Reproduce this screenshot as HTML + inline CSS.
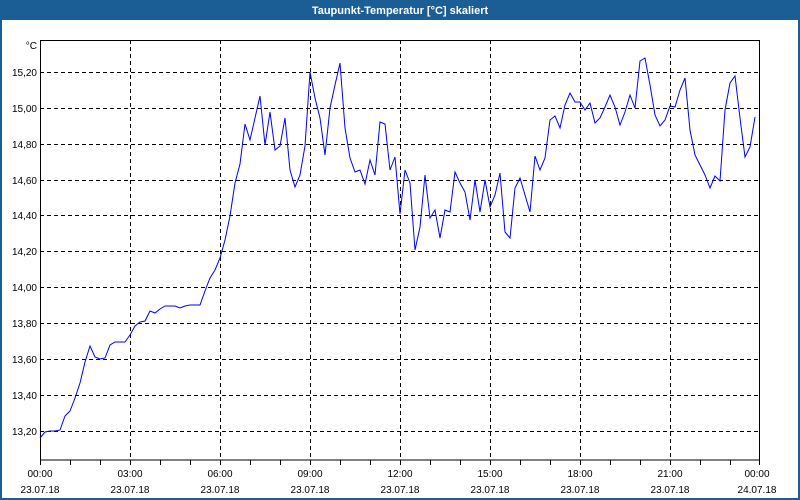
<!DOCTYPE html>
<html><head><meta charset="utf-8"><style>
html,body{margin:0;padding:0;width:800px;height:500px;overflow:hidden;background:#fff;font-family:"Liberation Sans",sans-serif}
</style></head><body>
<svg width="800" height="500" xmlns="http://www.w3.org/2000/svg" font-family="Liberation Sans, sans-serif">
<rect x="0" y="0" width="800" height="500" fill="#1b5e96"/>
<rect x="2" y="20" width="796" height="478" fill="#fff"/>
<text x="400" y="14" text-anchor="middle" fill="#fff" font-size="11" font-weight="bold">Taupunkt-Temperatur [°C] skaliert</text>
<g stroke="#000" stroke-dasharray="4,3" stroke-width="1">
<line x1="130.5" y1="40" x2="130.5" y2="460"/><line x1="220.5" y1="40" x2="220.5" y2="460"/><line x1="310.5" y1="40" x2="310.5" y2="460"/><line x1="400.5" y1="40" x2="400.5" y2="460"/><line x1="490.5" y1="40" x2="490.5" y2="460"/><line x1="580.5" y1="40" x2="580.5" y2="460"/><line x1="670.5" y1="40" x2="670.5" y2="460"/>
<line x1="40" y1="72.5" x2="760" y2="72.5"/><line x1="40" y1="108.5" x2="760" y2="108.5"/><line x1="40" y1="144.5" x2="760" y2="144.5"/><line x1="40" y1="180.5" x2="760" y2="180.5"/><line x1="40" y1="215.5" x2="760" y2="215.5"/><line x1="40" y1="251.5" x2="760" y2="251.5"/><line x1="40" y1="287.5" x2="760" y2="287.5"/><line x1="40" y1="323.5" x2="760" y2="323.5"/><line x1="40" y1="359.5" x2="760" y2="359.5"/><line x1="40" y1="395.5" x2="760" y2="395.5"/><line x1="40" y1="431.5" x2="760" y2="431.5"/>
</g>
<rect x="40.5" y="40.5" width="719" height="419.5" fill="none" stroke="#000"/>
<g stroke="#000"><path d="M40.5 460v5M70.5 460v5M100.5 460v5M130.5 460v5M160.5 460v5M190.5 460v5M220.5 460v5M250.5 460v5M280.5 460v5M310.5 460v5M340.5 460v5M370.5 460v5M400.5 460v5M430.5 460v5M460.5 460v5M490.5 460v5M520.5 460v5M550.5 460v5M580.5 460v5M610.5 460v5M640.5 460v5M670.5 460v5M700.5 460v5M730.5 460v5M759.5 460v5"/></g>
<g font-size="10" fill="#000" text-anchor="end">
<text x="37" y="49">°C</text>
<text x="37" y="76">15,20</text><text x="37" y="112">15,00</text><text x="37" y="148">14,80</text><text x="37" y="184">14,60</text><text x="37" y="219">14,40</text><text x="37" y="255">14,20</text><text x="37" y="291">14,00</text><text x="37" y="327">13,80</text><text x="37" y="363">13,60</text><text x="37" y="399">13,40</text><text x="37" y="435">13,20</text>
</g>
<g font-size="10" fill="#000" text-anchor="middle">
<text x="40" y="477">00:00</text><text x="40" y="493">23.07.18</text>
<text x="130" y="477">03:00</text><text x="130" y="493">23.07.18</text>
<text x="220" y="477">06:00</text><text x="220" y="493">23.07.18</text>
<text x="310" y="477">09:00</text><text x="310" y="493">23.07.18</text>
<text x="400" y="477">12:00</text><text x="400" y="493">23.07.18</text>
<text x="490" y="477">15:00</text><text x="490" y="493">23.07.18</text>
<text x="580" y="477">18:00</text><text x="580" y="493">23.07.18</text>
<text x="670" y="477">21:00</text><text x="670" y="493">23.07.18</text>
<text x="757" y="477">00:00</text><text x="757" y="493">24.07.18</text>
</g>
<polyline fill="none" stroke="#0000ff" stroke-width="1" points="40,438 45,432 50,431 55,431 60,430 65,416 70,411 75,398 80,383 85,362 90,346 95,357 100,359 105,358 110,345 115,342 120,342 125,342 130,335 135,326 140,322 145,321 150,311 155,313 160,309 165,306 170,306 175,306 180,308 185,306 190,305 195,305 200,305 205,291 210,278 215,270 220,258 225,240 230,216 235,183 240,164 245,124 250,140 255,118 260,96 265,145 270,112 275,150 280,146 285,118 290,170 295,187 300,175 305,146 310,72 315,98 320,118 325,155 330,108 335,85 340,63 345,128 350,158 355,172 360,170 365,184 370,160 375,175 380,122 385,124 390,170 395,157 400,214 405,170 410,183 415,250 420,227 425,175 430,218 435,210 440,238 445,210 450,212 455,172 460,183 465,192 470,220 475,180 480,212 485,180 490,207 495,195 500,173 505,232 510,238 515,188 520,178 525,195 530,212 535,156 540,170 545,158 550,120 555,116 560,128 565,105 570,93 575,102 580,102 585,110 590,103 595,123 600,118 605,107 610,95 615,107 620,125 625,112 630,95 635,108 640,61 645,58 650,85 655,115 660,126 665,120 670,106 675,107 680,90 685,78 690,130 695,155 700,165 705,175 710,188 715,176 720,181 725,110 730,83 735,76 740,118 745,157 750,147 755,117"/>
</svg>
</body></html>
